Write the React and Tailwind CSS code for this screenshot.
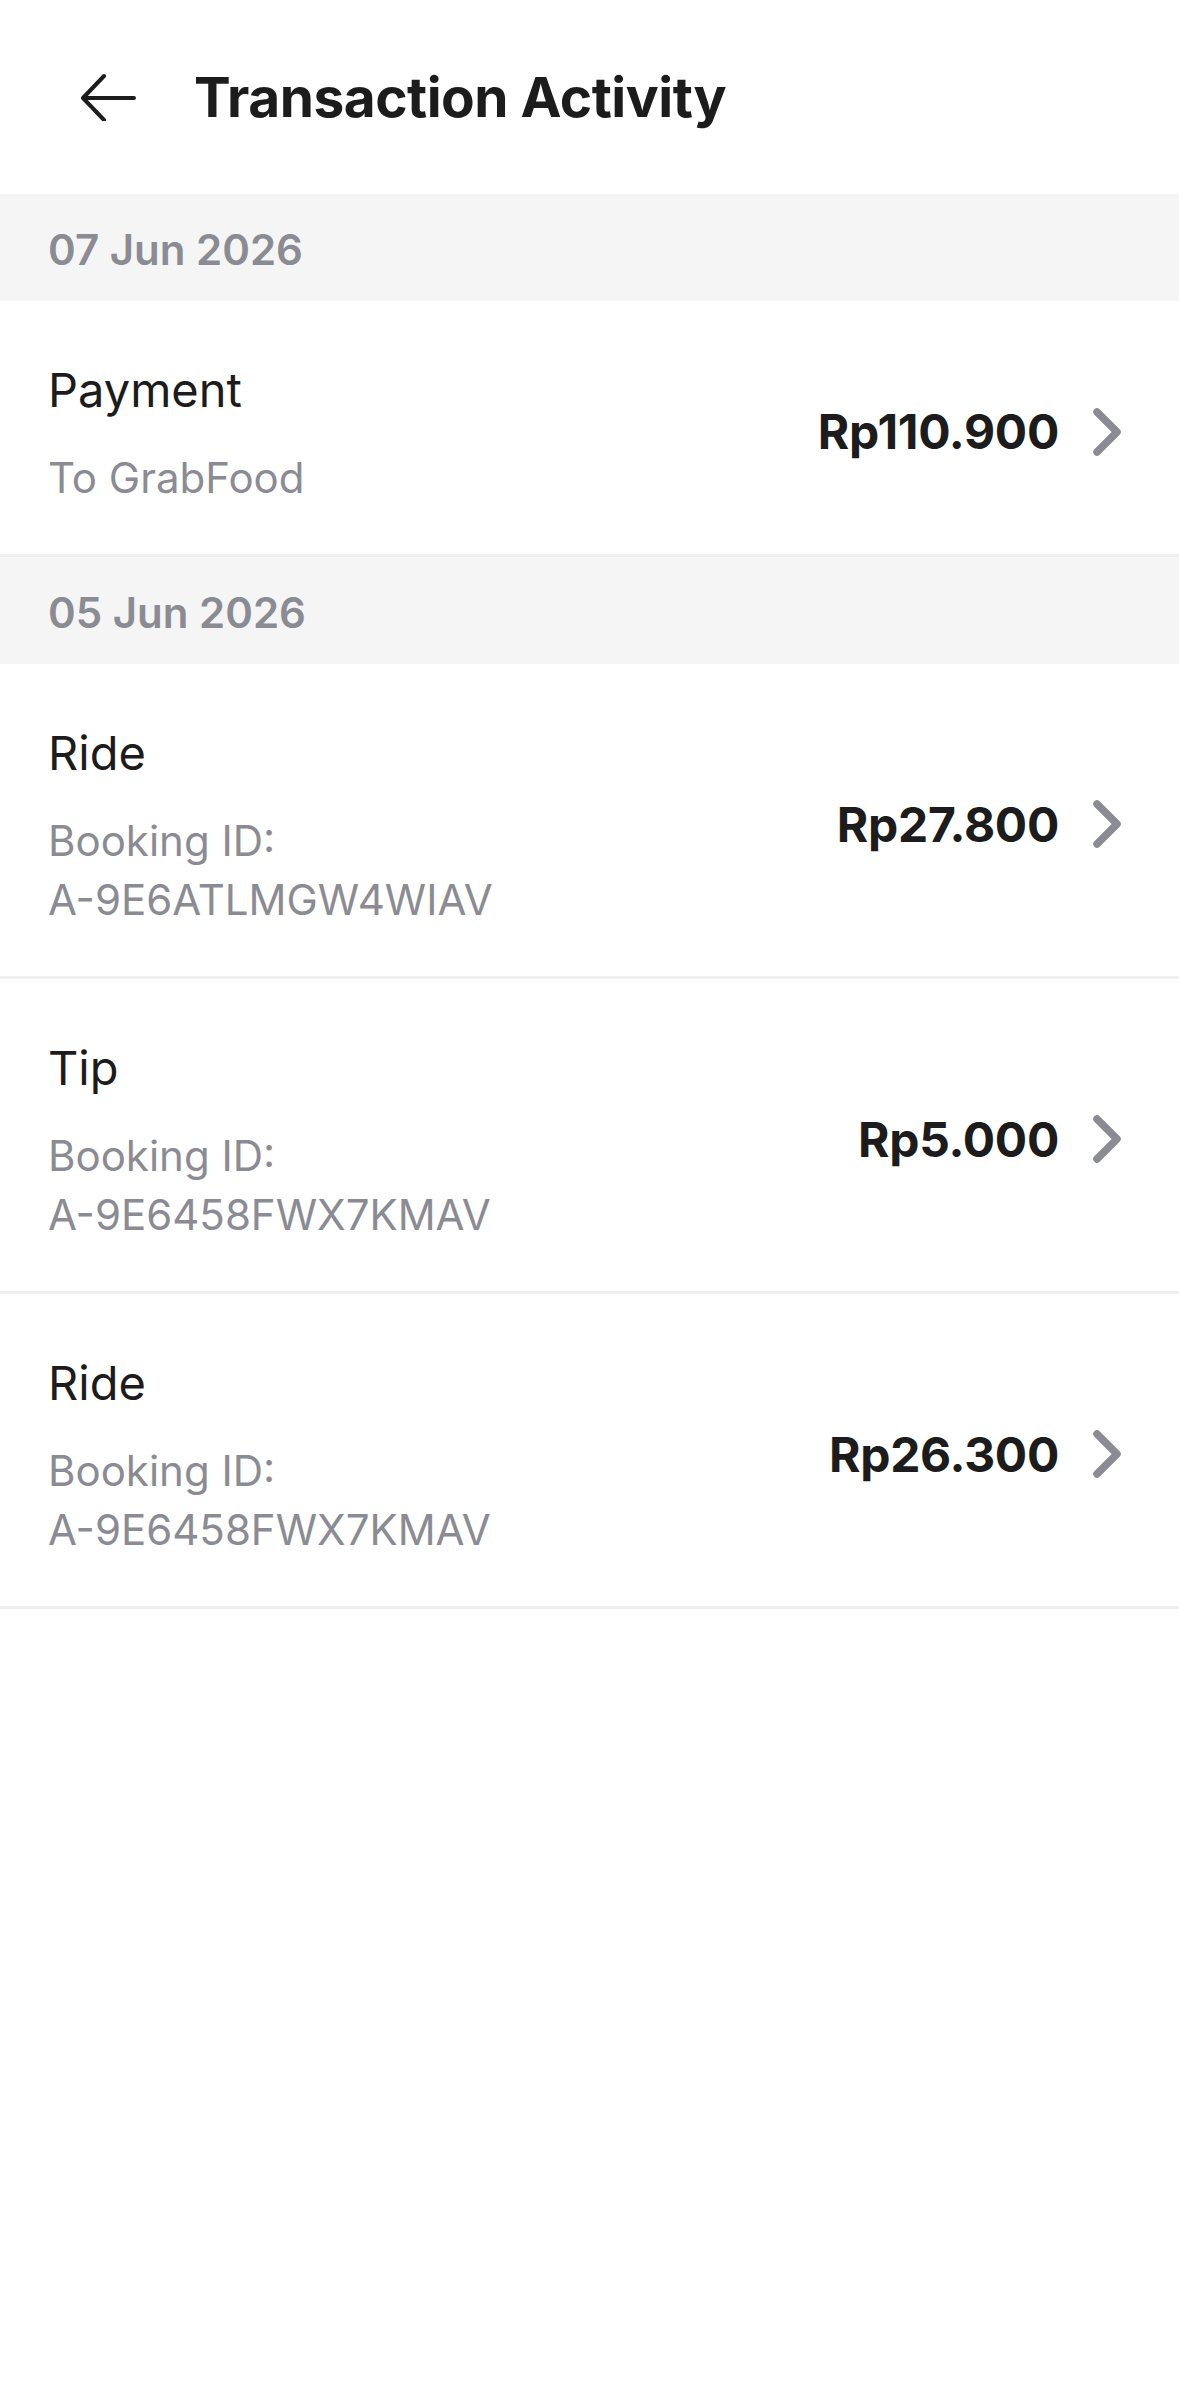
import React from "react";

const groups = [
  {
    date: "07 Jun 2026",
    items: [{ title: "Payment", lines: ["To GrabFood"], amount: "Rp110.900" }],
  },
  {
    date: "05 Jun 2026",
    items: [
      { title: "Ride", lines: ["Booking ID:", "A-9E6ATLMGW4WIAV"], amount: "Rp27.800" },
      { title: "Tip", lines: ["Booking ID:", "A-9E6458FWX7KMAV"], amount: "Rp5.000" },
      { title: "Ride", lines: ["Booking ID:", "A-9E6458FWX7KMAV"], amount: "Rp26.300" },
    ],
  },
];

function BackArrow() {
  return (
    <svg width="56" height="48" viewBox="0 0 56 48" fill="none">
      <path
        d="M54 25H3M24 3L3 25L24 47"
        stroke="#1c1c1c"
        strokeWidth="4"
        strokeLinecap="round"
        strokeLinejoin="round"
      />
    </svg>
  );
}

function Chevron() {
  return (
    <svg width="32" height="50" viewBox="0 0 32 50" fill="none">
      <path
        d="M6 5L26 25L6 45"
        stroke="#8b8b94"
        strokeWidth="7.5"
        strokeLinecap="round"
        strokeLinejoin="round"
      />
    </svg>
  );
}

function Row({ item }) {
  return (
    <div className="flex items-center border-b-[3px] border-[#efefef] pl-[48px] pr-[56px]">
      <div className="flex-1 min-w-0 pt-[60px] pb-[47px]">
        <div className="text-[47px] leading-[57px] text-[#1c1c1c]">{item.title}</div>
        <div className="mt-[30px] text-[42px] leading-[59px] text-[#8b8b94]">
          {item.lines.map((l, i) => (
            <div key={i}>{l}</div>
          ))}
        </div>
      </div>
      <div className="flex items-center gap-[32px] mt-[8px]">
        <span className="text-[48px] leading-[57px] font-bold tracking-[-0.3px] text-[#1c1c1c]">
          {item.amount}
        </span>
        <Chevron />
      </div>
    </div>
  );
}

export default function App() {
  return (
    <div
      className="min-h-screen bg-white"
      style={{ fontFamily: "Inter, 'Noto Sans', sans-serif" }}
    >
      {/* Header */}
      <div className="h-[194px] flex items-center pl-[80px]">
        <BackArrow />
        <h1 className="ml-[58px] text-[55px] font-bold tracking-[-0.5px] text-[#1c1c1c]">
          Transaction Activity
        </h1>
      </div>

      {groups.map((g) => (
        <div key={g.date}>
          <div className="h-[107px] bg-[#f5f5f5] flex items-center pl-[48px] pt-[3px]">
            <span className="text-[42px] font-semibold text-[#8b8b94]">{g.date}</span>
          </div>
          {g.items.map((item, i) => (
            <Row key={i} item={item} />
          ))}
        </div>
      ))}
    </div>
  );
}
